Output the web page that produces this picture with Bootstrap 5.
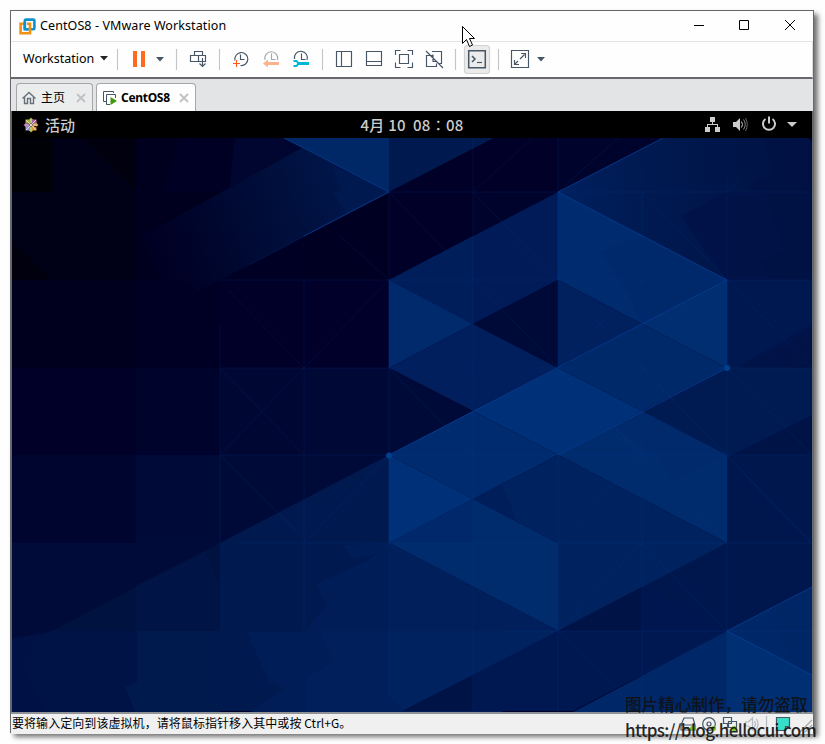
<!DOCTYPE html>
<html lang="zh-CN">
<head>
<meta charset="utf-8">
<meta name="viewport" content="width=device-width, initial-scale=1">
<title>CentOS8 - VMware Workstation</title>
<link href="https://cdn.jsdelivr.net/npm/bootstrap@5.3.0/dist/css/bootstrap.min.css" rel="stylesheet">
<style>
body{width:825px;height:744px;background:#fefefe;overflow:hidden;font-family:"Noto Sans","Noto Sans CJK SC",sans-serif;font-size:12px;color:#000;line-height:1}
svg{display:block;flex:none}
.vm-window{width:804px;height:723px;margin:10px 0 0 10px;border:1px solid #66686b;box-shadow:4px 4px 5px 0 rgba(0,0,0,.55);background:#fefefe}
.title-row{height:31px;border-bottom:1px solid #e3e4e6;padding-left:8px}
.title-text{margin-left:4px;font-size:12.5px;letter-spacing:.09px}
.tool-row{height:37px;border-bottom:2px solid #66686b;padding:0 0 1px 12px;border-right:1px solid #ddd}
.tool-row svg{fill:none;stroke:#465666;stroke-width:1.15}
.menu-text{width:71px;flex:none;white-space:nowrap;font-size:12.5px}
.tab-row{height:32px;background:#e2e4e6;padding:4px 0 0 5px}
.vm-tab{height:28px;border:1px solid #a5a7aa;border-bottom:0;border-radius:4px 4px 0 0;background:#ebecec}
.vm-tab.current{background:#fefefe;font-weight:700;width:100px;margin-left:3px;padding-left:5px}
.vm-tab.home{width:77px}
.tab-home{font-size:12px;width:24px;margin:0 11px 0 4px;white-space:nowrap}
.tab-vm{width:49px;margin:0 9px 0 3px;font-size:12px;letter-spacing:-.3px}
.guest{border-left:1px solid #66686b;border-right:1px solid #66686b;background:#000;width:802px}
.gnome-bar{height:27px;color:#ccc;font:500 15px/27px "Noto Sans CJK SC",sans-serif;background:#000}
.gnome-bar>div{flex:1 1 0}
.clock{letter-spacing:.25px}
.acts{margin:0 6px 0 11px}
.status-row{height:22px;flex:none;background:#f0f0f0;border-top:2px solid #8e9297;padding:0 0 0 1px;font-family:"Noto Sans CJK SC",sans-serif;letter-spacing:.06px}
.status-text{margin-top:-2px}
.pointer{position:absolute;left:461px;top:25px;z-index:3}
.watermark{position:absolute;left:625px;top:692px;z-index:4;font:500 16.6px/25px "Noto Sans CJK SC",sans-serif;color:#111;white-space:nowrap;opacity:.9}
.wm-link{font-size:17px;letter-spacing:-.62px;line-height:25px}
</style>
<script src="https://cdn.jsdelivr.net/npm/bootstrap@5.3.0/dist/js/bootstrap.bundle.min.js"></script>
</head>
<body class="position-relative">
<main class="vm-window d-flex flex-column">
  <header class="title-row d-flex align-items-center flex-shrink-0">
    <svg width="17" height="17" viewBox="0 0 17 17" fill="none" stroke-width="2.6"><rect x="5.8" y="1.6" width="9.6" height="9.6" rx="1" stroke="#0e91cf"/><path d="M5 5.800H1.600v9.400H11V5.800H8" stroke="#f09015"/><path d="M5.800 4v7.200H9" stroke="#0e91cf"/></svg>
    <span class="title-text">CentOS8 - VMware Workstation</span>
    <svg class="ms-auto me-2" width="122" height="30" viewBox="683 11 122 30" fill="none" stroke="#000"><path d="M694 25.500h10M739.500 20.500h9v9h-9zM785 20l10 10M795 20l-10 10"/></svg>
  </header>
  <nav class="tool-row d-flex align-items-center flex-shrink-0">
    <span class="menu-text">Workstation</span>
    <svg width="466" height="36" viewBox="94 41 466 36">
      <g fill="#222" stroke="none"><path d="M100 56h8l-4 4.500z"/><path fill="#465666" d="M156 57h8l-4 4.500zM537 57h8l-4 4.500z"/></g>
      <path stroke="#c3c5c7" d="M117.500 49v21M176.500 49v21M219.500 49v21M322.500 49v21M455.500 49v21M498.500 49v21"/>
      <path fill="#ff6a1c" stroke="none" d="M133 51h4v16h-4zM141 51h4v16h-4z"/>
      <path d="M194.500 51.500h8v4h-8zM190.500 55.500h15v6h-15zM198.500 55.500v6M202.500 58v8M199.500 63.500l3 3 3-3"/>
      <path d="M235 60.500a6.500 6.500 0 1 1 5.500 5M240.500 54.500v5h4"/><path stroke="#ff5a1c" d="M233 63.500h7M236.500 60v7"/>
      <g opacity=".5"><path d="M265 60a6.500 6.500 0 1 1 12.500 0M271.500 53.500v6h4"/><path fill="#ff6a1c" stroke="none" d="M263 63.500l5-4v2.500h11v3h-11v2.500z"/></g>
      <path d="M294.500 59a6.500 6.500 0 1 1 12.500 1M301.500 53.500v6h4"/><path stroke="#00b7d8" stroke-width="3" d="M297 63.500h12"/><path stroke="#00b7d8" stroke-width="2" d="M293.500 61h3l2 2.500-2 2.500h-3"/>
      <path d="M336.500 51.500h15v15h-15zM341.500 51.500v15M366.500 51.500h15v14h-15zM366.500 61.500h15"/>
      <path d="M399.500 54.500h9v9h-9zM395.500 55v-4.500h5M407.500 50.500h5v4.500M412.500 62.500v5h-5M400.500 67.500h-5v-5"/>
      <path d="M432 51.500h9.500v12h-2M437.500 61.500h-4.500v-7M433 55.500h-6.500v11h10v-3M426 51l17 17"/>
      <rect x="464.500" y="45.500" width="25" height="28" rx="3" fill="#ebebeb" stroke="#d2d2d2"/>
      <path stroke-width="1.500" d="M468.700 50.700h16.600v17h-16.600zM472 56l3 3-3 3"/><path d="M477 62.500h5"/>
      <path d="M511.500 50.500h17v17h-17zM514.500 60v4.500h4.500M515 64l3-3M520 59l4.500-4.500M521 53.500h4.500v4.500"/>
    </svg>
  </nav>
  <div class="tab-row d-flex flex-shrink-0">
    <div class="vm-tab home d-flex align-items-center">
      <svg class="ms-1" width="16" height="16" viewBox="0 0 16 16" fill="none" stroke="#66717b" stroke-width="1.400"><path d="M1.500 8.500 8 2.500l6.500 6M3.500 7v6.500h3v-5h3v5h3V7"/></svg>
      <span class="tab-home">主页</span>
      <svg width="10" height="10" viewBox="0 0 10 10" stroke="#bfc1c4" stroke-width="1.800"><path d="m1 1 8 8m0-8-8 8"/></svg>
    </div>
    <div class="vm-tab current d-flex align-items-center">
      <svg width="16" height="16" viewBox="0 0 16 16" fill="none" stroke="#465666"><path d="M4 11.500H1.500v-10h10V3M8 14.500H4.500v-10h9V8"/><path d="m8.500 7 6.500 4-6.500 4z" fill="#43970f" stroke="none"/></svg>
      <span class="tab-vm">CentOS8</span>
      <svg width="10" height="10" viewBox="0 0 10 10" stroke="#bfc1c4" stroke-width="1.800"><path d="m1 1 8 8m0-8-8 8"/></svg>
    </div>
  </div>
  <section class="guest d-flex flex-column flex-shrink-0">
    <div class="gnome-bar d-flex align-items-center">
      <div class="d-flex align-items-center">
        <svg class="acts" width="16" height="16" viewBox="-8 -8 16 16"><path fill="#a8ad35" d="M0-7.500 2.500-5 0-1-2.500-5zM-5.500-5.500H-1V-1l-4.500-1zM0 7.500 2.500 5 0 1-2.500 5z"/><path fill="#a765a0" d="M5.500-5.500V-1H1v-4.500zM-7.500 0-5-2.500-1 0l-4 2.500z"/><path fill="#dc9b3e" d="M7.500 0 5-2.500 1 0l4 2.500zM5.500 5.500H1V1h4.500z"/><path fill="#9b94cb" d="M-5.500 5.500V1H-1v4.500z"/><path stroke="#e8e4e0" stroke-width=".8" d="M-5-5 5 5M5-5-5 5M0-6V6M-6 0H6"/></svg>
        <span>活动</span>
      </div>
      <span class="clock">4月 10&nbsp; 08∶08</span>
      <div class="d-flex justify-content-end">
        <svg width="108" height="27" viewBox="704 111 108 27" fill="#ccc"><path d="M710 117h5v5h-5zM705 127h5v5h-5zM715 127h5v5h-5zM712 122h1v2h5v3h-1v-2h-9v2h-1v-3h5zM733 122h3l4-4v13l-4-4h-3z"/><g fill="none" stroke="#ccc"><path d="M741.500 121.500q2 3 0 6"/><path stroke="#888" d="M743.500 119.500q3.500 5 0 10"/><path stroke="#666" d="M745.500 118q3.500 6.500 0 13"/><path stroke-width="2" d="M765.500 119a6 6 0 1 0 7 0M769 116.500v7"/></g><path d="M787 122h10l-5 5z"/></svg>
      </div>
    </div>
    <svg width="800" height="574" viewBox="12 138 800 574" preserveAspectRatio="none">
      <defs>
        <linearGradient id="beam" gradientUnits="userSpaceOnUse" x1="160" y1="250" x2="389" y2="170"><stop stop-color="#000024"/><stop offset=".5" stop-color="#000e3a"/><stop offset="1" stop-color="#001b54"/></linearGradient>
        <linearGradient id="right" gradientUnits="userSpaceOnUse" x1="558" y1="192" x2="812" y2="180"><stop stop-color="#00205f"/><stop offset=".4" stop-color="#00194f"/><stop offset="1" stop-color="#001142"/></linearGradient>
      </defs>
      <rect x="12" y="138" width="800" height="574" fill="#000028"/>
      <path fill="#000016" d="M12 138h124v142H12z"/><path fill="#000007" d="M12 138h40v54H12z"/><path fill="#00000f" d="M82 138h54v54zM12 240l40 40H12z"/>
      <path fill="#00001e" d="M136 138h84v142h-84zM12 280h124v88H12z"/>
      <path fill="#000024" d="M136 280h84v88h-84zM220 192h84v88h-84z"/><path fill="#000028" d="M12 368h124v87H12z"/>
      <path fill="#000022" d="M304 192h85v88h-85z"/><path fill="#00002a" d="M304 280h85v88h-85z"/>
      <path fill="#00032c" d="M136 368h84v87h-84z"/><path fill="#000732" d="M220 368h84v87h-84z"/><path fill="#000936" d="M304 368h85v87h-85z"/>
      <path fill="#000530" d="M12 455h124v88H12z"/><path fill="#000a38" d="M136 455h253v88H136z"/><path fill="#000b3a" d="M12 543h209v120H12z"/>
      <path fill="#000024" d="M180 138h105l35 17-100 37h-58z"/><path fill="#00062f" d="M235 138h50l20 11-84 43h8z"/>
      <path fill="url(#beam)" d="m302 148 87 44-169 88-24 12-5-11h-29l-20-45z"/>
      <path fill="#001a50" d="m333 166 56 26-42 22-14-22h8z" opacity=".8"/>
      <path fill="#002866" d="M284 138h105v54z"/><path fill="#001a50" d="M389 138h105l-105 54z"/>
      <path fill="#000028" d="M494 138h169L558 192 389 280v-88z"/><path fill="#00042c" d="M558 138h105l-105 54zM473 192h85l-85 44z"/>
      <path fill="url(#right)" d="m558 192 105-54h149v318H727V280z"/>
      <path fill="#001246" d="M727 192v88l-46-64z" opacity=".8"/><path fill="#001246" d="M727 192h85v88h-85z"/>
      <path fill="#001142" d="M765 138h47v142h-40l-10-18 22-13-18-57-20-4 26-14z" opacity=".6"/>
      <path fill="#001850" d="M727 280h85v54l-72 34h-13z"/>
      <path fill="#001347" d="m812 324-74 42h74z" opacity=".7"/>
      <path fill="#001b58" d="m389 280 169-88v88l-85 44z"/><path fill="#001e5a" d="M473 236v88l-84-44z"/>
      <path fill="#002a6c" d="m389 280 84 44-84 44z"/><path fill="#000a38" d="m473 324 85-44v88z"/>
      <path fill="#001f5c" d="m389 368 84-44 85 44-85 43z"/>
      <path fill="#002b6e" d="m558 192 169 88-85 44-84-44z"/><path fill="#002868" d="m642 237 85 43-85 44-18-36-23-36 20-10z" opacity=".4"/><path fill="#00205e" d="m558 280 84 44-84 44z"/>
      <path fill="#002e70" d="M727 280v88l-85-44z"/><path fill="#00296a" d="m558 368 84-44 85 44-85 43z"/>
      <path fill="#003178" d="m558 368 84 43-84 44-85-44z"/><path fill="#000a38" d="m389 368 84 43-84 44z"/>
      <path fill="#002b6e" d="m389 455 84-44 85 44-85 44z"/><path fill="#003178" d="m389 455 84 44-84 44z"/>
      <path fill="#001650" d="M727 368h85v236L558 711H402l156-80 169-88v-88l-85-44z"/>
      <path fill="#001a52" d="M727 368v87l-85-44zM727 368h85v57l-80 30h-5z"/><path fill="#00174e" d="M727 455h85v88h-85z"/>
      <path fill="#001347" d="m812 415-80 40h80z"/><path fill="#00174e" d="M727 543h85v44l-85 44-85-44z"/>
      <path fill="#002c6e" d="m642 411 85 44v88l-169-88z"/><path fill="#00296a" d="m642 411 85 44-54 27-15-27-46-28z" opacity=".4"/>
      <path fill="#002360" d="m473 499 85-44 169 88-169 88v-88z"/><path fill="#001f5a" d="m473 499 29-15 15 37z"/>
      <path fill="#002868" d="m389 543 84-44v44z"/><path fill="#002b6d" d="m473 499 85 44v88l-169-88 84-44z"/><path fill="#00286a" d="m389 543 84-44v44z"/>
      <path fill="#001a50" d="m389 455-169 88v168h182l156-80-169-88z"/>
      <path fill="#00123f" d="m220 543-168 88h168z"/><path fill="#001446" d="m205 551 15 35v45h-84v-45z"/>
      <path fill="#001245" d="M52 631h84v81H12v-73z"/><path fill="#001347" d="M33 643l19-12h85v51l-12 5 10 25H45l-22-46 11-12z"/><path fill="#001a4e" d="M137 631h83v81h-85l-10-25 12-5z"/>
      <path fill="#001d57" d="m389 543-47 2 10 14 28-5-64 30 10 22-22 26h-57l22 50 15 7-33 23h251l56-81z"/>
      <path fill="#00205c" d="m389 543 169 88-156 81H307v-35l26-15-14-31h70z" opacity=".8"/><path fill="#00235f" d="M389 631h169l-156 80-13-16z"/>
      <path fill="#001347" d="m558 631 84-44v44zM402 711l71-36v36z"/><path fill="#001851" d="M558 631h169l-154 80H473v-36z"/>
      <path fill="#002868" d="m727 631 85-44v125H573z"/><path fill="#002f74" d="m727 631 85 44v37h-85z"/><path fill="#002363" d="m770 609 42-22v88l-20-10z" opacity=".5"/>
      <g fill="none" stroke="#0a439c" stroke-width=".7" opacity=".24">
        <path d="M304 280v351M389 192v520M473 138v574M558 138v574M642 192v520M727 175v537M220 325v218M220 280h592M389 192h423M220 368h592M220 455h592M240 543h572M504 631h308"/>
        <path d="m228 290 76 78M220 368l84 87M389 192l338 351M473 192l338 351M642 192l170 176M389 368l84 87M389 280 220 455M389 543l55 60M642 368l170 175M727 368l85 87M558 368l84 88M220 455l76 76M473 192l60-54M558 192l60-54M727 192l14-15M642 280l-84 88M642 455l-84 88M642 543l-84 88M389 543l-45 45M389 455l-85 88M642 543l84 88M558 631l70 70M340 236l49 44"/>
      </g>
      <g fill="none" stroke="#08429a" stroke-width="1" opacity=".75"><path d="m284 138 105 54-85 44M663 138l-105 54 169 88-338 175M727 368l-169 87M812 587l-85 44 85 44"/><path opacity=".35" d="m389 192-140 73M389 280v88M558 192v88M389 455v88M727 280v88"/></g>
      <circle cx="389" cy="455.500" r="3" fill="#00408f"/><circle cx="727" cy="368" r="3" fill="#00408f"/>
      <path fill="#000" d="M12 138h5q-5 0-5 5zM812 138h-5q5 0 5 5z"/>
    </svg>
  </section>
  <footer class="status-row d-flex align-items-center">
    <span class="status-text">要将输入定向到该虚拟机，请将鼠标指针移入其中或按 Ctrl+G。</span>
    <svg class="ms-auto" width="134" height="19" viewBox="679 714 134 19" fill="none" stroke="#465666" stroke-width="1.200"><path d="m681 724 3-7h9l2 7v5h-14zM681 724h14M684 726.500h5"/><circle cx="709" cy="723" r="6.300"/><circle cx="709" cy="723" r="2"/><path d="M723.500 716.500h8v6h-8zM728.500 720.500h8v6h-8zM727.500 723v3M725 726.500h4"/><g stroke="#b5bac0"><path d="M745.500 721h3l4-4v12l-4-4h-3zM754.500 720q2 3 0 6M756.500 718q3 5 0 10"/><path d="M766.500 715v15"/></g><g fill="#76c717" stroke="none"><circle cx="692.500" cy="727.500" r="2.500"/><circle cx="713.500" cy="727.500" r="2.500"/><circle cx="734" cy="727.500" r="2.500"/></g><path fill="#36dfc7" d="M776.500 716.500h13v9h-4v4h-9z"/><path stroke="#a5a7a9" d="m800 731 12-12M805 731l7-7"/></svg>
  </footer>
</main>
<svg class="pointer" width="15" height="23" viewBox="0 0 15 23"><path d="M1.500 1.500v17l4-4 3 7 3-1.500-3-6.500h5z" fill="#fff" stroke="#000"/></svg>
<aside class="watermark"><div>图片精心制作，请勿盗取</div><div class="wm-link">https://blog.hellocui.com</div></aside>
</body>
</html>
